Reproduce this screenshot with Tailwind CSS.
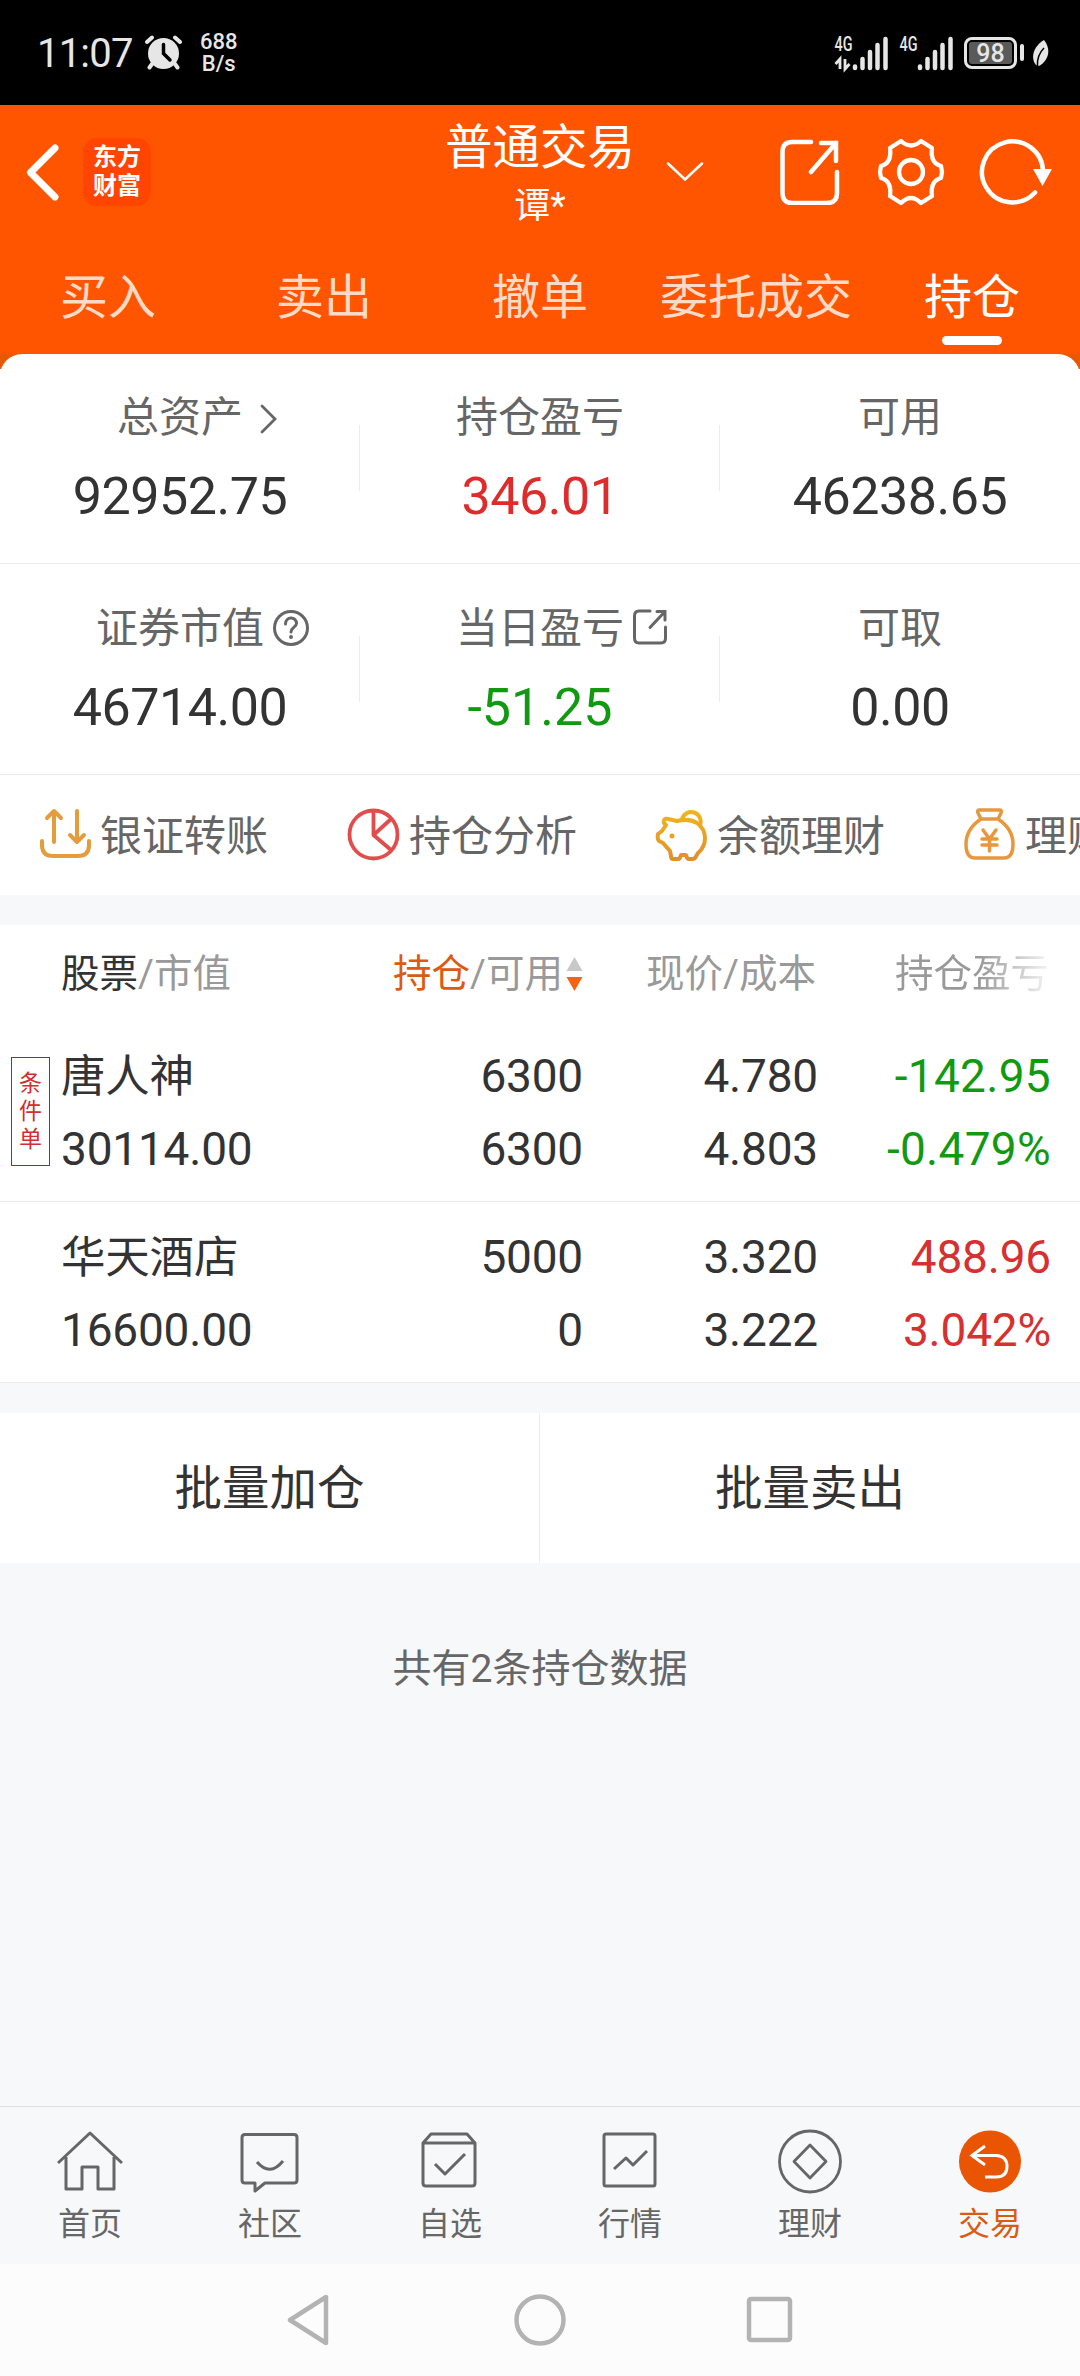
<!DOCTYPE html>
<html lang="zh-CN">
<head>
  <meta charset="UTF-8">
  <meta name="viewport" content="width=device-width, initial-scale=1.0">
  <title>持仓</title>
  <script src="https://cdn.jsdelivr.net/npm/@tailwindcss/browser@4"></script>
</head>
<body class="w-[1080px] h-[2376px] overflow-hidden flex flex-col bg-[#f7f8fa] text-[#333] font-['Roboto','Noto_Sans_CJK_SC',sans-serif]">

  <!-- 状态栏 -->
  <div class="h-[105px] shrink-0 bg-black text-[#e6e6e6] flex items-center justify-between pl-[37px] pr-[30px]">
    <div class="flex items-center">
      <span class="w-[96px] pt-[2px] text-[40px] leading-[48px] tracking-[-0.8px]">11:07</span>
      <svg class="ml-[12px] w-[37px] h-[36px]" viewBox="0 0 37 36">
        <circle cx="18.500" cy="18.500" r="15.500" fill="#e6e6e6"/>
        <path d="M2 7L7 2.500M35 7L30 2.500M7 29L4.500 32.500M30 29L32.500 32.500" stroke="#e6e6e6" stroke-width="4" stroke-linecap="round"/>
        <path d="M18.500 9.500V18.500L25 25" fill="none" stroke="#000" stroke-width="3.500" stroke-linecap="round"/>
      </svg>
      <div class="ml-[18px] pt-[1px] text-[22px] leading-[22px] font-medium text-center"><p>688</p><p>B/s</p></div>
    </div>
    <div class="flex items-center">
      <svg class="w-[54px] h-[36px] overflow-visible" viewBox="0 0 54 36" fill="none" stroke="#e6e6e6">
        <text x="0.500" y="16" font-size="20" font-weight="500" textLength="18" lengthAdjust="spacingAndGlyphs" fill="#e6e6e6" stroke="none">4G</text>
        <path d="M6 34V24L1.500 29M11 24V34L15.500 29" stroke-width="2.800"/>
        <path d="M21 31.500V33M28.500 24V33M36 17V33M43.500 10V33M51.500 4V33" stroke-width="4.500" stroke-linecap="round"/>
      </svg>
      <svg class="ml-[11px] w-[54px] h-[36px] overflow-visible" viewBox="0 0 54 36" fill="none" stroke="#e6e6e6">
        <text x="0.500" y="16" font-size="20" font-weight="500" textLength="18" lengthAdjust="spacingAndGlyphs" fill="#e6e6e6" stroke="none">4G</text>
        <path d="M21 31.500V33M28.500 24V33M36 17V33M43.500 10V33M51.500 4V33" stroke-width="4.500" stroke-linecap="round"/>
      </svg>
      <div class="ml-[11px] w-[53px] h-[32px] border-[3px] border-[#e6e6e6] rounded-[8px] p-[2px]">
        <div class="h-full rounded-[3px] bg-[#5a5a5a] text-[25px] leading-[23px] font-medium text-center">98</div>
      </div>
      <div class="ml-[3px] w-[4px] h-[17px] rounded-full bg-[#e6e6e6]"></div>
      <svg class="ml-[8px] w-[18px] h-[28px]" viewBox="0 0 18 28">
        <path d="M12 1C4 6 -1 14 2 23L4 26L7 27C16 22 20 11 12 1Z" fill="#e6e6e6"/>
        <path d="M12 9C7 14 5 20 5.500 27" fill="none" stroke="#000" stroke-width="1.500"/>
      </svg>
    </div>
  </div>

  <!-- 顶部导航 -->
  <header class="shrink-0 bg-[#ff5500] text-white">
    <div class="relative h-[134px] flex items-center">
      <svg class="ml-[26px] w-[34px] h-[60px]" viewBox="0 0 34 60" fill="none" stroke="#fff" stroke-width="7" stroke-linecap="round" stroke-linejoin="round"><path d="M29 6L4.500 30.500L29 55"/></svg>
      <div class="ml-[23px] w-[68px] h-[68px] rounded-[14px] bg-[#ff4500] flex flex-col items-center justify-center text-[24px] leading-[29px] font-bold"><p>东方</p><p>财富</p></div>
      <div class="absolute inset-x-0 top-0 pt-[13px] flex flex-col items-center">
        <h1 class="text-[47.5px] leading-[60px]">普通交易</h1>
        <p class="pt-[2px] text-[36px] leading-[52px]">谭*</p>
      </div>
      <svg class="ml-[515px] w-[38px] h-[20px]" viewBox="0 0 38 20" fill="none" stroke="#fff" stroke-width="2.500" stroke-linecap="round"><path d="M2 1.500L19 17.500L36 1.500"/></svg>
      <svg class="ml-[76px] w-[60px] h-[66px]" viewBox="0 0 60 66" fill="none" stroke="#fff" stroke-width="4.500" stroke-linecap="round">
        <path d="M31 3H12Q2.500 3 2.500 13V54Q2.500 64 12 64H47Q57 64 57 54V33M41 4H56V22M56 4L31 33"/>
      </svg>
      <svg class="ml-[37px] w-[68px] h-[68px]" viewBox="0 0 68 68" fill="none" stroke="#fff" stroke-width="4.300" stroke-linejoin="round">
        <circle cx="34" cy="34" r="12"/>
        <path d="M24 3L13 10Q15 25 4 28L3 34L4 40Q15 43 13 58L24 65Q34 55 44 65L55 58Q53 43 64 40L65 34L64 28Q53 25 55 10L44 3Q34 12 24 3Z"/>
      </svg>
      <svg class="ml-[34px] w-[74px] h-[68px]" viewBox="0 0 74 68">
        <path d="M64 34A30.500 30.500 0 1 0 56 54.500" fill="none" stroke="#fff" stroke-width="4.500" stroke-linecap="round"/>
        <path d="M54 31H73L63.500 48Z" fill="#fff"/>
      </svg>
    </div>
    <nav class="h-[115px] grid grid-cols-5 text-center text-[48px] leading-[118px] text-[#ffdbc7]">
      <span>买入</span>
      <span>卖出</span>
      <span>撤单</span>
      <span>委托成交</span>
      <div class="relative text-white">持仓<i class="absolute top-[97px] left-[78px] w-[60px] h-[9px] rounded-full bg-white"></i></div>
    </nav>
  </header>

  <!-- 资产概览 -->
  <section class="shrink-0 bg-[linear-gradient(#e85800_15px,#fff_15px)]">
    <div class="bg-white rounded-t-[22px]">
      <div class="h-[210px] border-b border-[#ececec] grid grid-cols-3 pt-[34px] text-center">
        <div class="relative">
          <p class="text-[42px] leading-[60px] text-[#666]"><span class="relative">总资产<svg class="absolute left-[143px] top-[11px] w-[18px] h-[30px]" viewBox="0 0 18 30" fill="none" stroke="#666" stroke-width="2.800" stroke-linecap="round"><path d="M2 2L15 15L2 28"/></svg></span></p>
          <p class="mt-[19px] text-[52px] leading-[60px] tracking-[-0.5px]">92952.75</p>
          <i class="absolute right-0 top-[37px] w-px h-[66px] bg-[#ececec]"></i>
        </div>
        <div class="relative">
          <p class="text-[42px] leading-[60px] text-[#666]">持仓盈亏</p>
          <p class="mt-[19px] text-[52px] leading-[60px] tracking-[-0.5px] text-[#dd2c2c]">346.01</p>
          <i class="absolute right-0 top-[37px] w-px h-[66px] bg-[#ececec]"></i>
        </div>
        <div>
          <p class="text-[42px] leading-[60px] text-[#666]">可用</p>
          <p class="mt-[19px] text-[52px] leading-[60px] tracking-[-0.5px]">46238.65</p>
        </div>
      </div>
      <div class="h-[211px] border-b border-[#ececec] grid grid-cols-3 pt-[35px] text-center">
        <div class="relative">
          <p class="text-[42px] leading-[60px] text-[#666]"><span class="relative">证券市值<svg class="absolute left-[176px] top-[5px] w-[38px] h-[38px]" viewBox="0 0 38 38" fill="none" stroke="#666" stroke-width="3" stroke-linecap="round"><circle cx="19" cy="19" r="16.500"/><path d="M13.500 15C13.500 7 24.500 7 24.500 14.500C24.500 18 19 18.500 19 23"/><circle cx="19" cy="28" r="1" fill="#666" stroke-width="2"/></svg></span></p>
          <p class="mt-[19px] text-[52px] leading-[60px] tracking-[-0.5px]">46714.00</p>
          <i class="absolute right-0 top-[37px] w-px h-[66px] bg-[#ececec]"></i>
        </div>
        <div class="relative">
          <p class="text-[42px] leading-[60px] text-[#666]"><span class="relative">当日盈亏<svg class="absolute left-[176px] top-[5px] w-[36px] h-[36px]" viewBox="0 0 36 36" fill="none" stroke="#666" stroke-width="3" stroke-linecap="round"><path d="M18 2H7Q2.500 2 2.500 7V29Q2.500 34 7 34H29Q33.500 34 33.500 29V18M25 2.500H33V11M33 2.500L18 18.500"/></svg></span></p>
          <p class="mt-[19px] text-[52px] leading-[60px] text-[#119a11]">-51.25</p>
          <i class="absolute right-0 top-[37px] w-px h-[66px] bg-[#ececec]"></i>
        </div>
        <div>
          <p class="text-[42px] leading-[60px] text-[#666]">可取</p>
          <p class="mt-[19px] text-[52px] leading-[60px] tracking-[-0.5px]">0.00</p>
        </div>
      </div>
      <!-- 快捷入口，可横向滚动 -->
      <div class="h-[120px] pl-[39px] flex items-center overflow-hidden text-[42px] leading-[60px] text-[#666] whitespace-nowrap">
        <div class="w-[308px] shrink-0 flex items-center gap-[8px]">
          <svg class="w-[53px] h-[54px]" viewBox="0 0 53 54" fill="none" stroke="#e59c3c" stroke-width="4" stroke-linecap="round" stroke-linejoin="round"><path d="M3 33V37Q3 48 14 48H39Q50 48 50 37V33M15 34V3M8 10L15 3L22 10M38 3V34M31 27L38 34L45 27"/></svg>
          <span class="pt-[3px]">银证转账</span>
        </div>
        <div class="w-[308px] shrink-0 flex items-center gap-[9px]">
          <svg class="w-[53px] h-[54px]" viewBox="0 0 53 54" fill="none" stroke="#e24c4c" stroke-width="3.800" stroke-linejoin="round"><circle cx="26.500" cy="26.500" r="24"/><path d="M26.500 3V27L44 11M26.500 27L44 42"/></svg>
          <span class="pt-[3px]">持仓分析</span>
        </div>
        <div class="w-[308px] shrink-0 flex items-center gap-[9px]">
          <svg class="w-[53px] h-[54px]" viewBox="0 0 53 54" fill="none" stroke="url(#pig)" stroke-width="4" stroke-linejoin="round" stroke-linecap="round">
            <defs><linearGradient id="pig" x1="0" y1="0" x2="0" y2="1"><stop offset="0" stop-color="#efb41e"/><stop offset="1" stop-color="#e2902a"/></linearGradient></defs>
            <path d="M9 15Q8 10 13 11L22 13Q34 10 42 15Q50 21 50 30Q50 39 43 45L40 50Q39 51 37 51H34Q32 51 31 47H26Q25 51 23 51H18Q16 51 16 48L15 43L8 35L4 33Q2 31 3 26L7 23L11 17ZM27 11A9.500 9.500 0 1 1 45 17"/>
            <circle cx="17" cy="28" r="1" fill="#e8a024" stroke="#e8a024" stroke-width="3"/>
          </svg>
          <span class="pt-[3px]">余额理财</span>
        </div>
        <div class="w-[308px] shrink-0 flex items-center gap-[9px]">
          <svg class="w-[53px] h-[54px]" viewBox="0 0 53 54" fill="none" stroke="#e9973c" stroke-width="3.500" stroke-linejoin="round" stroke-linecap="round">
            <path d="M16 2H37Q39 2 38 5L35 11H18L15 5Q14 2 16 2ZM18 11Q3 21 3 36Q3 50 12 50H41Q50 50 50 36Q50 21 35 11M20 22L26.500 31L33 22M26.500 31V43M19 31H34M19 37H34"/>
          </svg>
          <span class="pt-[3px]">理财</span>
        </div>
      </div>
    </div>
  </section>

  <!-- 持仓列表 -->
  <section class="mt-[30px] shrink-0 bg-white">
    <div class="h-[95px] pt-[2px] pl-[61px] grid grid-cols-[220px_302px_233px_233px] items-center text-right text-[38.5px] leading-[56px] text-[#999]">
      <p class="text-left"><span class="text-[#333]">股票</span>/市值</p>
      <div class="flex items-center justify-end"><span class="text-[#d95b14]">持仓</span>/可用
        <svg class="ml-[3px] w-[17px] h-[36px]" viewBox="0 0 17 36"><path d="M8.500 1L16.500 15H0.500Z" fill="#c8c8c8"/><path d="M8.500 35L16.500 21H0.500Z" fill="#f26419"/></svg>
      </div>
      <p>现价/成本</p>
      <p><span class="bg-[linear-gradient(90deg,#999_55%,#f4f4f4)] bg-clip-text text-transparent">持仓盈亏</span></p>
    </div>

    <div class="relative h-[182px] border-b border-[#ececec] pl-[61px] pt-[19px] grid grid-cols-[220px_302px_235px_233px] auto-rows-[73px] items-center text-right text-[46px] leading-[60px] tracking-[-0.2px]">
      <div class="absolute left-[11px] top-[37px] w-[39px] h-[109px] border border-[#8f3030] flex flex-col items-center justify-center text-[23px] leading-[28px] text-[#cf3030]"><span>条</span><span>件</span><span>单</span></div>
      <p class="pt-[2px] text-left text-[44.5px]">唐人神</p>
      <p>6300</p>
      <p>4.780</p>
      <p class="tracking-[0.3px] text-[#119a11]">-142.95</p>
      <p class="text-left">30114.00</p>
      <p>6300</p>
      <p>4.803</p>
      <p class="tracking-[0.3px] text-[#119a11]">-0.479%</p>
    </div>

    <div class="h-[181px] border-b border-[#ececec] pl-[61px] pt-[18px] grid grid-cols-[220px_302px_235px_233px] auto-rows-[73px] items-center text-right text-[46px] leading-[60px] tracking-[-0.2px]">
      <p class="pt-[2px] text-left text-[44.5px]">华天酒店</p>
      <p>5000</p>
      <p>3.320</p>
      <p class="text-[#d63030]">488.96</p>
      <p class="text-left">16600.00</p>
      <p>0</p>
      <p>3.222</p>
      <p class="text-[#d63030]">3.042%</p>
    </div>
  </section>

  <div class="mt-[30px] h-[150px] shrink-0 bg-white grid grid-cols-2 text-center text-[47.5px] leading-[152px]">
    <button class="h-[150px] border-r border-[#ececec]">批量加仓</button>
    <button class="h-[150px]">批量卖出</button>
  </div>
  <p class="mt-[76px] text-center text-[39px] leading-[60px] text-[#666]">共有2条持仓数据</p>

  <!-- 底部标签栏 -->
  <nav class="mt-auto h-[158px] shrink-0 border-t border-[#dedede] grid grid-cols-6 pt-[21px] text-center text-[32px] leading-[40px] text-[#666]">
    <div class="flex flex-col items-center gap-[8px]">
      <svg class="w-[66px] h-[68px]" viewBox="0 0 66 68" fill="none" stroke="#666" stroke-width="3" stroke-linejoin="round"><path d="M1 35L33 5L65 35M9 29V61H25V39H41V61H57V29"/></svg>
      <span>首页</span>
    </div>
    <div class="flex flex-col items-center gap-[8px]">
      <svg class="w-[66px] h-[68px]" viewBox="0 0 66 68" fill="none" stroke="#666" stroke-width="3" stroke-linejoin="round"><path d="M8 6.500H57Q60 6.500 60 9.500V52Q60 55 57 55H28L18 63V55H8Q5 55 5 52V9.500Q5 6.500 8 6.500ZM20 34Q33 49 46 33"/></svg>
      <span>社区</span>
    </div>
    <div class="flex flex-col items-center gap-[8px]">
      <svg class="w-[66px] h-[68px]" viewBox="0 0 66 68" fill="none" stroke="#666" stroke-width="3" stroke-linejoin="round"><path d="M6 15V55Q6 58 9 58H55Q58 58 58 55V15L50 6H14L6 15H58M18 36L28 46L48 26"/></svg>
      <span>自选</span>
    </div>
    <div class="flex flex-col items-center gap-[8px]">
      <svg class="w-[66px] h-[68px]" viewBox="0 0 66 68" fill="none" stroke="#666" stroke-width="3"><rect x="7" y="6" width="51" height="52" rx="2"/><path d="M17 41L29 30L36 37L50 23" stroke-linejoin="round"/></svg>
      <span>行情</span>
    </div>
    <div class="flex flex-col items-center gap-[8px]">
      <svg class="w-[66px] h-[68px]" viewBox="0 0 66 68" fill="none" stroke="#666" stroke-width="2.800"><circle cx="33" cy="33.500" r="30.500"/><path d="M33 17L49 33.500L33 50L17 33.500Z" stroke-linejoin="round"/></svg>
      <span>理财</span>
    </div>
    <div class="flex flex-col items-center gap-[8px] text-[#d95b14]">
      <svg class="w-[66px] h-[68px]" viewBox="0 0 66 68" fill="none" stroke="#fff" stroke-width="3"><circle cx="33" cy="33.500" r="31" fill="#ea5504" stroke="none"/><path d="M28 18L15 27.500L28 37M16 27.500H39Q50 28 50 38.500Q50 49 39 49H28"/></svg>
      <span>交易</span>
    </div>
  </nav>

  <!-- 系统导航键 -->
  <div class="h-[112px] shrink-0 bg-[#fcfcfc] flex items-center justify-center">
    <svg class="w-[506px] h-[60px]" viewBox="0 0 506 60" fill="none" stroke="#b3b3b3" stroke-width="4.500" stroke-linejoin="round">
      <path d="M39 7V53L3 30Z"/>
      <circle cx="253" cy="30" r="23.500"/>
      <rect x="462" y="9" width="41" height="41" rx="2"/>
    </svg>
  </div>
</body>
</html>
